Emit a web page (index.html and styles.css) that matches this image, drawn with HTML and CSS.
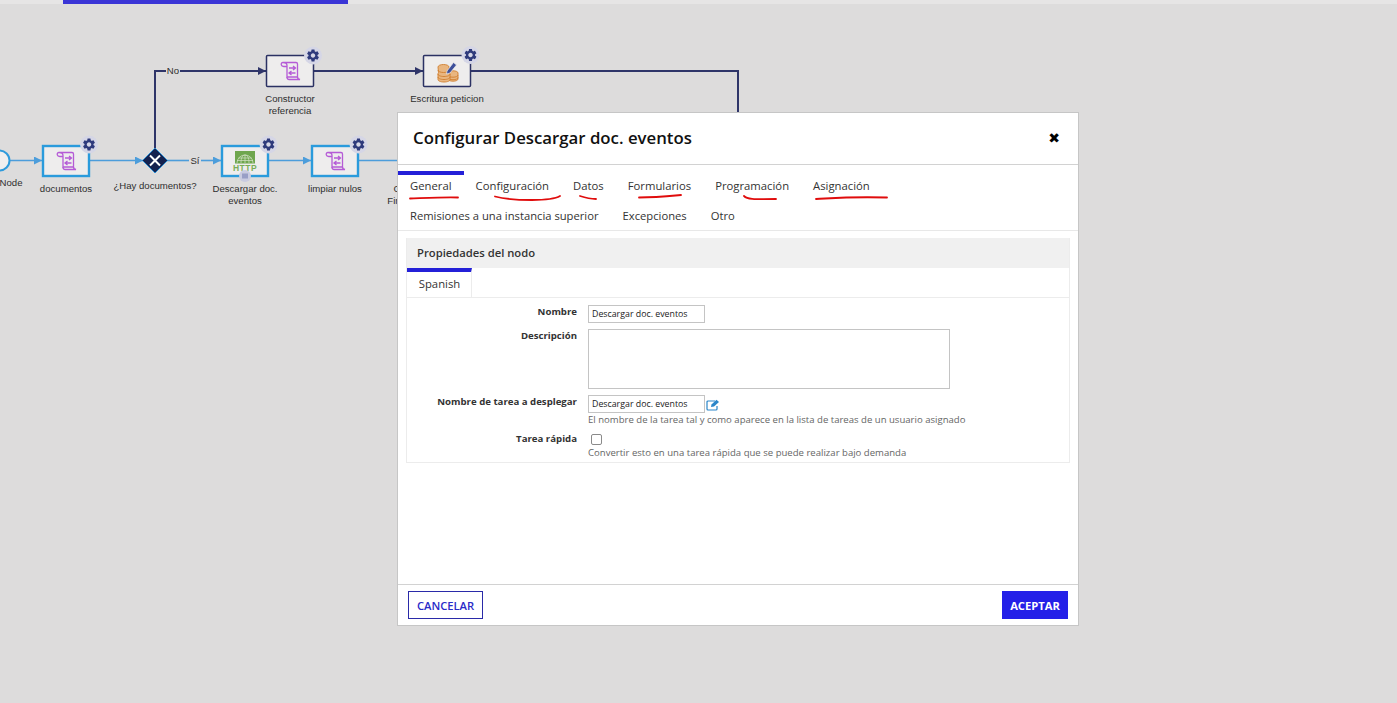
FILE: index.html
```html
<!DOCTYPE html>
<html lang="es">
<head>
<meta charset="utf-8">
<title>Configurar Descargar doc. eventos</title>
<link rel="stylesheet" href="styles.css">
</head>
<body>
<div class="topbar"><div class="topbar-fill"></div></div>
<main class="canvas">
<svg class="diagram" width="1397" height="699" viewBox="0 4 1397 699">
  <defs>
    <path id="gear" fill-rule="evenodd" d="M19.14 12.94c.04-.3.06-.61.06-.94 0-.32-.02-.64-.07-.94l2.03-1.58c.18-.14.23-.41.12-.61l-1.92-3.32c-.12-.22-.37-.29-.59-.22l-2.39.96c-.5-.38-1.03-.7-1.62-.94l-.36-2.54c-.04-.24-.24-.41-.48-.41h-3.84c-.24 0-.43.17-.47.41l-.36 2.54c-.59.24-1.13.57-1.62.94l-2.39-.96c-.22-.08-.47 0-.59.22L2.74 8.87c-.12.21-.08.47.12.61l2.03 1.58c-.05.3-.09.63-.09.94s.02.64.07.94l-2.03 1.58c-.18.14-.23.41-.12.61l1.92 3.32c.12.22.37.29.59.22l2.39-.96c.5.38 1.03.7 1.62.94l.36 2.54c.05.24.24.41.48.41h3.84c.24 0 .44-.17.47-.41l.36-2.54c.59-.24 1.13-.56 1.62-.94l2.39.96c.22.08.47 0 .59-.22l1.92-3.32c.12-.22.07-.47-.12-.61l-2.01-1.58zM12 15.6c-1.98 0-3.6-1.62-3.6-3.6s1.62-3.6 3.6-3.6 3.6 1.62 3.6 3.6-1.62 3.6-3.6 3.6z"/>
    <g id="badge">
      <circle class="badge-bg" cx="0" cy="0" r="9"/>
      <use href="#gear" class="badge-gear" transform="translate(-7.500 -7.500) scale(.625)"/>
    </g>
    <g id="script" class="ico-script">
      <path d="M-7-8.500H6c1 0 1.500.7 1.500 1.500V6H-3V-5.500C-3-7.500-4.500-8.500-7-8.500c-1.300 0-2 1.100-1.700 2.400.2 1 1.100 1.600 2.400 1.600H-3"/>
      <path d="M-3 6c0 1.700.9 2.500 2.200 2.500H10C8.500 8.200 7.500 7.300 7.500 6"/>
      <path d="M-1-3H5M3-5 5.500-3 3-1M5.500 2H-.5M1.500 0-1 2 1.500 4"/>
    </g>
    <marker id="arrow-blue" viewBox="0 0 8 8" refX="8" refY="4" markerWidth="8" markerHeight="8" markerUnits="userSpaceOnUse" orient="auto"><path class="arrow-blue" d="M0 0 8 4 0 8Z"/></marker>
    <marker id="arrow-dark" viewBox="0 0 8 8" refX="8" refY="4" markerWidth="8" markerHeight="8" markerUnits="userSpaceOnUse" orient="auto"><path class="arrow-dark" d="M0 0 8 4 0 8Z"/></marker>
  </defs>

  <g class="line-dark">
    <path d="M155 150V71H166"/>
    <path d="M180 71H266" marker-end="url(#arrow-dark)"/>
    <path d="M314 71H423" marker-end="url(#arrow-dark)"/>
    <path d="M471 71H738V113"/>
  </g>
  <g class="line-blue">
    <path d="M9 160.500H42" marker-end="url(#arrow-blue)"/>
    <path d="M90 160.500H143" marker-end="url(#arrow-blue)"/>
    <path d="M167 160.500H189"/>
    <path d="M201 160.500H221" marker-end="url(#arrow-blue)"/>
    <path d="M269 160.500H311" marker-end="url(#arrow-blue)"/>
    <path d="M359 160.500H398"/>
  </g>

  <circle class="start" cx="-.5" cy="160.500" r="10"/>

  <rect class="node-active" x="43" y="146" width="46" height="30"/>
  <use href="#script" transform="translate(66 161)"/>
  <use href="#badge" transform="translate(89 144.500)"/>

  <path class="gateway" d="M155 148 167.500 160.500 155 173 142.500 160.500Z"/>
  <path class="gateway-x" d="M150 155.500 160 165.500M160 155.500 150 165.500"/>

  <rect class="node-active" x="222" y="146" width="46" height="30"/>
  <rect class="http-box" x="235" y="151" width="20" height="12.500"/>
  <g class="http-globe">
    <path d="M237 163a8 8 0 0 1 16 0M241 163c0-6 2-8 4-8s4 2 4 8M245 155V163M238.500 158H251.500M237 160.500H253"/>
  </g>
  <text class="http-text" x="245" y="171">HTTP</text>
  <circle class="multi-bg" cx="245" cy="176" r="6"/>
  <path class="multi" d="M243 173.500V178.500M245 173.500V178.500M247 173.500V178.500"/>
  <use href="#badge" transform="translate(268.500 144.500)"/>

  <rect class="node-active" x="312" y="146" width="46" height="30"/>
  <use href="#script" transform="translate(335 161)"/>
  <use href="#badge" transform="translate(358.500 144.500)"/>

  <rect class="node-plain" x="266.500" y="55.500" width="47" height="31" rx="1"/>
  <use href="#script" transform="translate(290 71)"/>
  <use href="#badge" transform="translate(313 55.500)"/>

  <rect class="node-plain" x="423.500" y="55.500" width="47" height="31" rx="1"/>
  <g class="coins">
    <path d="M448 73c0-1.300 2.200-2.200 5-2.200s5 .9 5 2.200V79c0 1.300-2.200 2.200-5 2.200s-5-.9-5-2.200Z"/>
    <path d="M448 75c0 1.300 2.200 2.200 5 2.200s5-.9 5-2.200M448 77.500c0 1.300 2.200 2.200 5 2.200s5-.9 5-2.200"/>
    <path d="M438 67c0-1.400 2.400-2.500 5.500-2.500s5.500 1.100 5.500 2.500V73c1 .3 1 1 1 1V79.500c0 1.500-2.600 2.500-6 2.500s-6-1-6-2.500V74c0-.6.200-1 .5-1.200Z"/>
    <path d="M438 70c0 1.400 2.400 2.500 5.500 2.500s5.500-1.100 5.500-2.500M438 74c0 1.500 2.600 2.500 6 2.500s6-1 6-2.500M438 77c0 1.500 2.600 2.500 6 2.500s6-1 6-2.500"/>
  </g>
  <path class="pencil" d="M447 71 453.500 62.500 456.500 65 450 73 446.500 74Z"/>
  <use href="#badge" transform="translate(470.500 55)"/>

  <g class="node-label">
    <text x="11" y="186">Node</text>
    <text x="66" y="192">documentos</text>
    <text x="155" y="189">¿Hay documentos?</text>
    <text x="245" y="192">Descargar doc.</text>
    <text x="245" y="204">eventos</text>
    <text x="335" y="192">limpiar nulos</text>
    <text x="397" y="192">C</text>
    <text x="394" y="204">Fin</text>
    <text x="290" y="102">Constructor</text>
    <text x="290" y="114">referencia</text>
    <text x="447" y="102">Escritura peticion</text>
    <text x="173" y="74">No</text>
    <text x="195" y="164">Sí</text>
  </g>
</svg>
</main>

<section class="modal">
  <header class="modal-head">
    <h1 class="modal-title">Configurar Descargar doc. eventos</h1>
    <span class="modal-close">✖</span>
  </header>
  <nav class="tabs">
    <div class="tab-row">
      <a class="tab tab-active">General</a>
      <a class="tab">Configuración</a>
      <a class="tab">Datos</a>
      <a class="tab">Formularios</a>
      <a class="tab">Programación</a>
      <a class="tab">Asignación</a>
    </div>
    <div class="tab-row tab-row-second">
      <a class="tab">Remisiones a una instancia superior</a>
      <a class="tab">Excepciones</a>
      <a class="tab">Otro</a>
    </div>
  </nav>
  <div class="modal-body">
    <div class="panel">
      <h2 class="panel-head">Propiedades del nodo</h2>
      <div class="lang-tabs"><span class="lang-tab">Spanish</span></div>
      <div class="form">
        <label class="form-label">Nombre</label>
        <div class="form-field"><div class="input">Descargar doc. eventos</div></div>
        <label class="form-label">Descripción</label>
        <div class="form-field"><div class="textarea"></div></div>
        <label class="form-label">Nombre de tarea a desplegar</label>
        <div class="form-field">
          <div class="input-row">
            <div class="input">Descargar doc. eventos</div>
            <svg class="edit-icon" width="14" height="12" viewBox="0 0 14 12"><path class="edit-box" d="M9 2H2a1 1 0 0 0-1 1v7a1 1 0 0 0 1 1h8a1 1 0 0 0 1-1V7"/><path class="edit-pen" d="M5 8 5.500 5.500 10.500 .8 13 3 8 7.500Z"/></svg>
          </div>
          <p class="help">El nombre de la tarea tal y como aparece en la lista de tareas de un usuario asignado</p>
        </div>
        <label class="form-label">Tarea rápida</label>
        <div class="form-field">
          <span class="checkbox"></span>
          <p class="help">Convertir esto en una tarea rápida que se puede realizar bajo demanda</p>
        </div>
      </div>
    </div>
  </div>
  <footer class="modal-foot">
    <button class="btn btn-outline">CANCELAR</button>
    <button class="btn btn-solid">ACEPTAR</button>
  </footer>
</section>

<svg class="marks" width="1397" height="703" viewBox="0 0 1397 703">
  <path d="M410 198.500C425 198 445 197 458 197.500"/>
  <path d="M495 196.500C505 199 520 200 532 200 545 200 555 199 560 196"/>
  <path d="M580 196C586 198 590 199 596 199"/>
  <path d="M639 197.500C655 197.500 670 196 681 195"/>
  <path d="M744 196C747 199 752 199.500 776 199"/>
  <path d="M816 199C835 198 850 196.500 887 197.500"/>
</svg>
</body>
</html>
```
FILE: styles.css
```css
html, body {
  margin: 0;
  padding: 0;
  height: 703px;
  overflow: hidden;
  background: #dddcdc;
  font-family: "Open Sans", "Liberation Sans", sans-serif;
}
.topbar {
  height: 4px;
  background: #e6e5e5;
  padding-left: 63px;
}
.topbar-fill {
  width: 285px;
  height: 4px;
  background: #3a35d6;
}
.canvas {
  height: 699px;
}
.diagram {
  display: block;
}
.line-dark path, .line-blue path {
  fill: none;
}
.line-dark path { stroke: #2f3569; stroke-width: 2; }
.line-blue path { stroke: #4c9ddb; stroke-width: 1.6; }
.arrow-blue { fill: #4c9ddb; }
.arrow-dark { fill: #2f3569; }
.start { fill: #f0efef; stroke: #2f9bdc; stroke-width: 2; }
.node-active { fill: #eeeded; stroke: #2a9bdc; stroke-width: 2.4; }
.node-plain { fill: #eeeded; stroke: #2b3163; stroke-width: 1.5; }
.badge-bg { fill: #d5d6e6; }
.badge-gear { fill: #2e3a7c; }
.ico-script path { fill: none; stroke: #b55bd6; stroke-width: 1.3; }
.gateway { fill: #14224f; stroke: #2a8bd0; stroke-width: 1; }
.gateway-x { fill: none; stroke: #fff; stroke-width: 2; }
.http-box { fill: #6fa64e; }
.http-globe path { fill: none; stroke: #d5e3c8; stroke-width: .7; }
.http-text {
  font-family: "Liberation Sans", sans-serif;
  font-size: 8.500px;
  font-weight: 700;
  letter-spacing: .5px;
  fill: #7aae58;
  text-anchor: middle;
}
.multi-bg { fill: #c9cbe0; }
.multi { fill: none; stroke: #5f6aa6; stroke-width: .9; }
.coins path {
  fill: #e9b680;
  stroke: #d07f30;
  stroke-width: .9;
}
.coins path:nth-child(even) { fill: none; }
.pencil { fill: #3d4f9a; stroke: #eeeded; stroke-width: .7; }
.node-label text {
  font-family: "Liberation Sans", sans-serif;
  font-size: 9.600px;
  fill: #2e2e2e;
  text-anchor: middle;
}

.modal {
  position: absolute;
  left: 397px;
  top: 112px;
  width: 680px;
  height: 512px;
  display: flex;
  flex-direction: column;
  background: #fff;
  border: 1px solid #c6c6c6;
}
.modal-head {
  flex: none;
  display: flex;
  align-items: center;
  justify-content: space-between;
  padding: 0 18px 2px 15px;
  box-sizing: border-box;
  height: 52px;
  border-bottom: 1px solid #d2d2d2;
}
.modal-title {
  margin: 0;
  font-size: 16.800px;
  font-weight: 600;
  color: #111;
}
.modal-close {
  font-family: "DejaVu Sans", sans-serif;
  font-size: 14px;
  color: #000;
}
.tabs {
  flex: none;
  box-sizing: border-box;
  height: 66px;
  padding-top: 6px;
  border-bottom: 1px solid #e8e8e8;
}
.tab-row {
  display: flex;
}
.tab {
  box-sizing: border-box;
  height: 30px;
  padding: 3px 12px 0;
  font-size: 11.300px;
  line-height: 16px;
  color: #333;
  border-top: 4px solid transparent;
}
.tab-row-second .tab {
  font-size: 11.220px;
}
.tab-active {
  border-top-color: #2420d8;
}
.modal-body {
  flex: 1;
  padding: 7px 8px 0;
}
.panel {
  border: 1px solid #ececec;
  border-top: 0;
}
.panel-head {
  margin: 0;
  height: 30px;
  padding-left: 10px;
  background: #f0f0f0;
  font-size: 11.250px;
  font-weight: 600;
  line-height: 30px;
  color: #333;
}
.lang-tabs {
  height: 29px;
  border-bottom: 1px solid #ececec;
}
.lang-tab {
  box-sizing: border-box;
  display: inline-block;
  width: 65px;
  height: 29px;
  padding: 4px 0 0 1px;
  border-top: 4px solid #2420d8;
  border-right: 1px solid #ececec;
  text-align: center;
  font-size: 11.300px;
  line-height: 16px;
  color: #333;
  background: #fff;
}
.form {
  display: grid;
  grid-template-columns: 170px 1fr;
  column-gap: 11px;
  padding: 7px 0 3px;
  row-gap: 6px;
}
.form-label {
  text-align: right;
  font-size: 9.650px;
  font-weight: 700;
  line-height: 14px;
  color: #333;
}
.form-field { min-width: 0; }
.input {
  box-sizing: border-box;
  width: 117px;
  height: 18px;
  padding-left: 3px;
  border: 1px solid #c4c4c4;
  font-size: 8.800px;
  line-height: 16px;
  color: #222;
  background: #fff;
  white-space: nowrap;
}
.input-row {
  display: flex;
  align-items: center;
  gap: 1px;
}
.edit-icon { display: block; margin-top: 2px; }
.edit-box { fill: none; stroke: #2b86c9; stroke-width: 1.200; }
.edit-pen { fill: #2b86c9; }
.textarea {
  box-sizing: border-box;
  width: 362px;
  height: 60px;
  border: 1px solid #c4c4c4;
}
.help {
  margin: 0;
  font-size: 9.570px;
  line-height: 13px;
  color: #666;
}
.checkbox {
  display: block;
  box-sizing: border-box;
  width: 11px;
  height: 11px;
  margin: 2px 0 1px 3px;
  border: 1px solid #8a8a8a;
  border-radius: 2px;
  background: #fff;
}
.modal-foot {
  flex: none;
  box-sizing: border-box;
  height: 41px;
  display: flex;
  align-items: flex-start;
  justify-content: space-between;
  padding: 6px 10px 0;
  border-top: 1px solid #d2d2d2;
}
.btn {
  box-sizing: border-box;
  height: 28px;
  padding: 0;
  font-family: "Open Sans", "Liberation Sans", sans-serif;
  font-size: 11.200px;
  font-weight: 600;
}
.btn-outline {
  width: 75px;
  color: #2a2ac8;
  background: #fff;
  border: 1px solid #2a2aa8;
}
.btn-solid {
  width: 66px;
  color: #fff;
  font-weight: 700;
  background: #2420e8;
  border: 0;
}
.marks {
  position: absolute;
  left: 0;
  top: 0;
  pointer-events: none;
}
.marks path {
  fill: none;
  stroke: #e00c0c;
  stroke-width: 1.800;
  stroke-linecap: round;
}
```
